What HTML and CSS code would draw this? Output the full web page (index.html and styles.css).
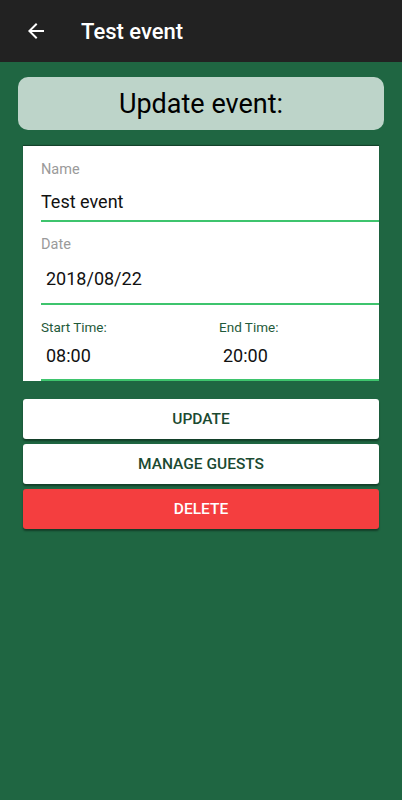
FILE: index.html
```html
<!DOCTYPE html>
<html>
<head>
<meta charset="utf-8">
<link rel="stylesheet" href="styles.css">
</head>
<body>
<header class="appbar">
  <svg class="back" width="24" height="24" viewBox="0 0 24 24"><path d="M20 11H7.83l5.59-5.59L12 4l-8 8 8 8 1.41-1.41L7.83 13H20v-2z" fill="#fff"/></svg>
  <h1 class="title">Test event</h1>
</header>
<main class="content">
  <div class="banner">Update event:</div>
  <section class="form">
    <div class="field">
      <div class="label">Name</div>
      <div class="value">Test event</div>
    </div>
    <div class="field">
      <div class="label">Date</div>
      <div class="value indent">2018/08/22</div>
    </div>
    <div class="field times">
      <div class="col">
        <div class="label small">Start Time:</div>
        <div class="value indent">08:00</div>
      </div>
      <div class="col">
        <div class="label small">End Time:</div>
        <div class="value indent2">20:00</div>
      </div>
    </div>
  </section>
  <div class="buttons">
    <button class="btn">UPDATE</button>
    <button class="btn">MANAGE GUESTS</button>
    <button class="btn danger">DELETE</button>
  </div>
</main>
</body>
</html>
```
FILE: styles.css
```css
html, body {
  margin: 0;
  padding: 0;
  height: 100%;
}
body {
  background: #1f6642;
  font-family: Roboto, "Liberation Sans", sans-serif;
}
.appbar {
  height: 62px;
  background: #222222;
  display: flex;
  align-items: center;
  padding-left: 24px;
  box-sizing: border-box;
}
.back {
  width: 24px;
  height: 24px;
}
.title {
  margin: 0 0 0 33px;
  color: #fff;
  font-size: 22px;
  font-weight: 500;
}
.content {
  padding: 15px 18px 0 18px;
}
.banner {
  height: 53px;
  background: #bdd4c9;
  border-radius: 10px;
  display: flex;
  align-items: center;
  justify-content: center;
  font-size: 27px;
  color: #000;
}
.form {
  margin: 16px 5px 0 5px;
  background: #fff;
  padding-left: 18px;
  box-shadow: 0 -1px 1px rgba(0,0,0,0.35);
}
.field {
  border-bottom: 2px solid #3ec46d;
  padding-top: 16px;
  padding-bottom: 8px;
}
.field + .field {
  padding-top: 15px;
  padding-bottom: 14px;
}
.times.field {
  padding-bottom: 13px;
}
.label {
  font-size: 14.5px;
  line-height: 16px;
  color: #9a9a9a;
}
.label.small {
  font-size: 13.5px;
  line-height: 14px;
  color: #1f5a3a;
}
.value {
  font-size: 18px;
  line-height: 20px;
  color: #111;
  margin-top: 14px;
}
.field + .field .value {
  margin-top: 16px;
}
.times .value {
  margin-top: 12px !important;
}
.indent {
  padding-left: 5px;
}
.indent2 {
  padding-left: 4px;
}
.times {
  display: grid;
  grid-template-columns: 178px 1fr;
}
.buttons {
  margin: 18px 5px 0 5px;
  display: flex;
  flex-direction: column;
  gap: 5px;
}
.btn {
  height: 40px;
  border: none;
  border-radius: 3px;
  background: #fff;
  color: #1b4a31;
  font-family: Roboto, "Liberation Sans", sans-serif;
  font-size: 15.5px;
  font-weight: 500;
  box-shadow: 0 2px 2px rgba(0,0,0,0.4);
  padding: 0;
}
.btn.danger {
  background: #f43e3f;
  color: #fff;
}
```
